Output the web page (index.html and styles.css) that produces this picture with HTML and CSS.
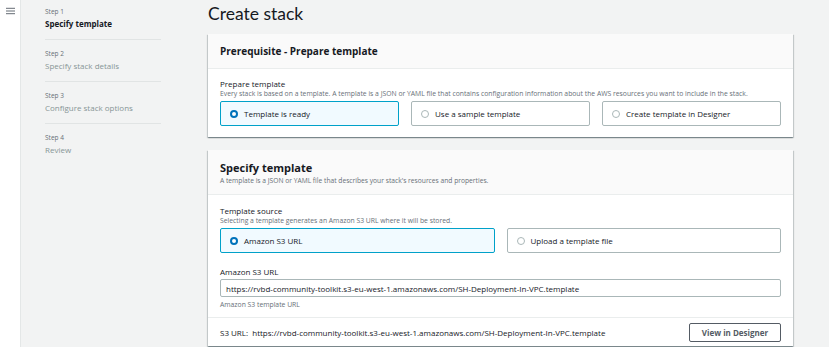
FILE: index.html
```html
<!DOCTYPE html>
<html lang="en">
<head>
  <meta charset="UTF-8" />
  <title>Create stack</title>
  <link rel="stylesheet" href="styles.css">
</head>
<body>

  <!-- Barra estreita com o menu -->
  <aside class="rail">
    <svg class="menu-icon" viewBox="0 0 10 8" fill="none" stroke="#545b64" stroke-width="1">
      <path d="M0 1h10M0 4h10M0 7h10"></path>
    </svg>
  </aside>

  <!-- Passos do wizard -->
  <nav class="steps">
    <div class="step active">
      <span class="step-num">Step 1</span>
      <span class="step-name">Specify template</span>
    </div>
    <div class="step">
      <span class="step-num">Step 2</span>
      <span class="step-name">Specify stack details</span>
    </div>
    <div class="step">
      <span class="step-num">Step 3</span>
      <span class="step-name">Configure stack options</span>
    </div>
    <div class="step last">
      <span class="step-num">Step 4</span>
      <span class="step-name">Review</span>
    </div>
  </nav>

  <main>
    <h1>Create stack</h1>

    <!-- Prerequisite -->
    <section class="card">
      <div class="card-header">
        <h2>Prerequisite - Prepare template</h2>
      </div>
      <div class="card-body">
        <div class="field-label">Prepare template</div>
        <div class="field-desc">Every stack is based on a template. A template is a JSON or YAML file that contains configuration information about the AWS resources you want to include in the stack.</div>
        <div class="tiles three">
          <div class="tile selected"><span class="radio"></span>Template is ready</div>
          <div class="tile"><span class="radio"></span>Use a sample template</div>
          <div class="tile"><span class="radio"></span>Create template in Designer</div>
        </div>
      </div>
    </section>

    <!-- Specify template -->
    <section class="card">
      <div class="card-header tall">
        <h2 class="big">Specify template</h2>
        <p class="header-desc">A template is a JSON or YAML file that describes your stack's resources and properties.</p>
      </div>
      <div class="card-body source">
        <div class="field-label">Template source</div>
        <div class="field-desc">Selecting a template generates an Amazon S3 URL where it will be stored.</div>
        <div class="tiles two">
          <div class="tile selected"><span class="radio"></span>Amazon S3 URL</div>
          <div class="tile"><span class="radio"></span>Upload a template file</div>
        </div>

        <div class="field-label url-label">Amazon S3 URL</div>
        <input class="url-input" type="text" value="https://rvbd-community-toolkit.s3-eu-west-1.amazonaws.com/SH-Deployment-In-VPC.template">
        <div class="field-hint">Amazon S3 template URL</div>
      </div>
      <div class="card-footer">
        <span>S3 URL:&nbsp; https://rvbd-community-toolkit.s3-eu-west-1.amazonaws.com/SH-Deployment-In-VPC.template</span>
        <button class="btn">View in Designer</button>
      </div>
    </section>
  </main>

</body>
</html>
```

FILE: styles.css
```css
/* Cores da consola */
:root {
  --bg: #f2f3f3;
  --text: #16191f;
  --muted: #687078;
  --line: #eaeded;
  --border: #aab7b8;
  --blue: #0073bb;
  --blue-light: #f1faff;
  --blue-border: #00a1c9;
}

* {
  box-sizing: border-box;
  margin: 0;
  padding: 0;
}
body {
  background: var(--bg);
  font-family: 'Open Sans', 'Noto Sans', sans-serif;
  color: var(--text);
  display: flex;
  height: 347px;
  overflow: hidden;
}

/* Rail */
.rail {
  width: 21px;
  flex-shrink: 0;
  background: #fff;
  border-right: 1px solid #e4e7e7;
  padding: 7px 0 0 6px;
}
.menu-icon {
  display: block;
  width: 9px;
  height: 8px;
}

/* Steps */
.steps {
  width: 187px;
  flex-shrink: 0;
  padding: 7px 0 0 24px;
}
.step {
  width: 116px;
  display: flex;
  flex-direction: column;
  padding: 0 0 9px;
  margin-bottom: 9px;
  border-bottom: 1px solid #e1e4e4;
}
.step.last {
  border-bottom: none;
}
.step-num {
  font-size: 6.5px;
  line-height: 10px;
  color: var(--muted);
}
.step-name {
  font-size: 8px;
  line-height: 13px;
  color: #879596;
}
.step.active .step-name {
  color: var(--text);
  font-weight: 700;
}

/* Main */
main {
  width: 585px;
  flex-shrink: 0;
}
h1 {
  font-family: 'Lato', 'Open Sans', sans-serif;
  font-weight: 400;
  font-size: 17.5px;
  line-height: 24px;
  margin: 2px 0 8px;
}

.card {
  background: #fff;
  box-shadow: 0 1px 1px rgba(0,28,36,0.3), 1px 1px 1px rgba(0,28,36,0.15), -1px 1px 1px rgba(0,28,36,0.15);
  margin-bottom: 13px;
}
.card-header {
  background: #fafafa;
  border-bottom: 1px solid var(--line);
  height: 35px;
  padding: 0 12px;
  display: flex;
  flex-direction: column;
  justify-content: center;
}
.card-header.tall {
  height: 45px;
  padding-top: 2px;
}
h2 {
  font-size: 10px;
  font-weight: 700;
  line-height: 14px;
}
h2.big {
  font-size: 11px;
  line-height: 16px;
}
.header-desc {
  font-size: 6.7px;
  line-height: 10px;
  color: var(--muted);
}
.card-body {
  padding: 9px 12px 11px;
}
.card-body.source {
  padding: 10px 12px 8px;
}
.field-label {
  font-size: 8px;
  line-height: 11px;
}
.field-desc {
  font-size: 6.8px;
  line-height: 9px;
  color: var(--muted);
  margin-bottom: 3px;
}

/* Radio tiles */
.tiles {
  display: grid;
  gap: 12px;
}
.tiles.three {
  grid-template-columns: repeat(3, 1fr);
}
.tiles.two {
  grid-template-columns: repeat(2, 1fr);
}
.tile {
  height: 25px;
  border: 1px solid var(--border);
  border-radius: 2px;
  display: flex;
  align-items: center;
  padding-left: 9px;
  font-size: 8px;
}
.tile.selected {
  background: var(--blue-light);
  border-color: var(--blue-border);
}
.radio {
  width: 8px;
  height: 8px;
  border-radius: 50%;
  border: 1px solid #aab7b8;
  margin-right: 6px;
  background: #fff;
}
.tile.selected .radio {
  border: 2.5px solid var(--blue);
}

.url-label {
  margin-top: 13px;
}
.url-input {
  display: block;
  width: 100%;
  height: 18px;
  margin-top: 2px;
  border: 1px solid var(--border);
  border-radius: 2px;
  padding: 0 5px;
  font-family: inherit;
  font-size: 8px;
  color: var(--text);
}
.field-hint {
  font-size: 6.8px;
  line-height: 9px;
  color: var(--muted);
  margin-top: 3px;
}

/* Footer */
.card-footer {
  border-top: 1px solid var(--line);
  height: 29px;
  padding: 0 12px;
  display: flex;
  align-items: center;
  justify-content: space-between;
  font-size: 8px;
}
.btn {
  width: 92px;
  height: 19px;
  background: #fff;
  border: 1px solid #545b64;
  border-radius: 2px;
  font-family: inherit;
  font-size: 8px;
  font-weight: 700;
  color: #545b64;
}
```
